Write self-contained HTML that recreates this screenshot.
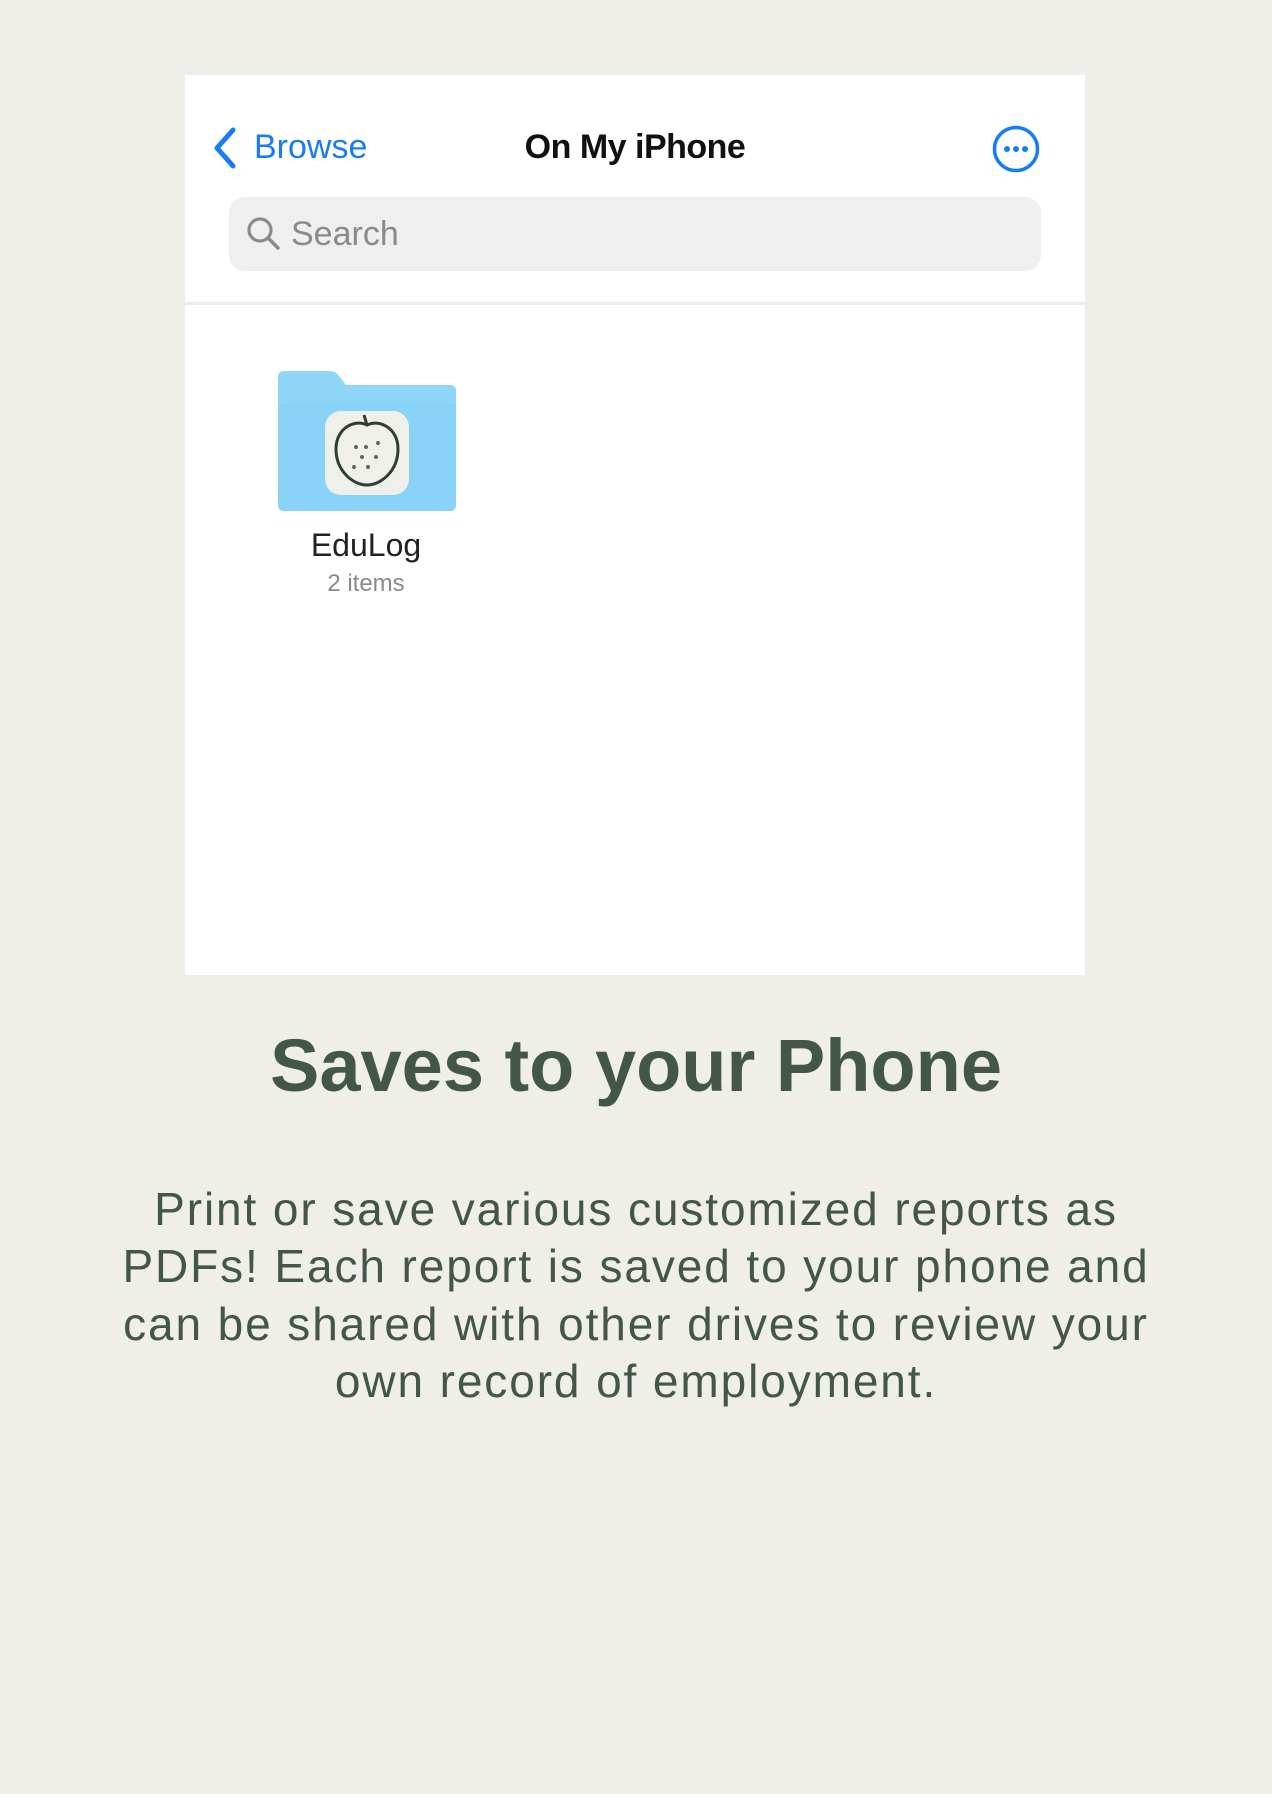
<!DOCTYPE html>
<html><head><meta charset="utf-8"><style>
html,body{margin:0;padding:0}
body{width:1272px;height:1794px;background:#efeee9;position:relative;overflow:hidden;font-family:"Liberation Sans",sans-serif}
.card{position:absolute;left:185px;top:75px;width:900px;height:900px;background:#fff}
.abs{position:absolute;white-space:nowrap}
</style></head><body>
<div class="card">
  <svg class="abs" style="left:26px;top:52px" width="28" height="42" viewBox="0 0 28 42"><path d="M22 3 L6 21 L22 39" fill="none" stroke="#1a7cf5" stroke-width="5" stroke-linecap="round" stroke-linejoin="round"/></svg>
  <div class="abs" style="left:69px;top:52px;font-size:34px;color:#1a7cf5;line-height:40px">Browse</div>
  <div class="abs" style="left:0;width:900px;text-align:center;top:52px;font-size:34px;font-weight:bold;color:#111;line-height:40px;letter-spacing:-0.5px">On My iPhone</div>
  <svg class="abs" style="left:806px;top:49px" width="50" height="50" viewBox="0 0 50 50"><circle cx="25" cy="25" r="21.5" fill="none" stroke="#1a7cf5" stroke-width="3.5"/><circle cx="16" cy="25" r="3" fill="#1a7cf5"/><circle cx="25" cy="25" r="3" fill="#1a7cf5"/><circle cx="34" cy="25" r="3" fill="#1a7cf5"/></svg>
  <div class="abs" style="left:44px;top:122px;width:812px;height:74px;border-radius:16px;background:#efefef"></div>
  <svg class="abs" style="left:60px;top:140px" width="38" height="38" viewBox="0 0 38 38"><circle cx="15" cy="15" r="11" fill="none" stroke="#8a8a8e" stroke-width="3.2"/><path d="M23 23 L33 33" stroke="#8a8a8e" stroke-width="3.5" stroke-linecap="round"/></svg>
  <div class="abs" style="left:106px;top:139px;font-size:34px;color:#8a8a8e;line-height:40px">Search</div>
  <div class="abs" style="left:0;top:227px;width:900px;height:3px;background:#ececec"></div>
  <svg class="abs" style="left:93px;top:296px" width="178" height="140" viewBox="0 0 178 140"><path d="M0 6 Q0 0 6 0 L52 0 Q58 0 62 6 L68 14 L172 14 Q178 14 178 20 L178 134 Q178 140 172 140 L6 140 Q0 140 0 134 Z" fill="#8fd6f8"/><rect x="0" y="30" width="178" height="110" rx="6" fill="#88d3f7"/><rect x="47" y="40" width="84" height="84" rx="16" fill="#f0f0ea"/><path d="M89 54 C78 48 58 56 58 78 C58 100 75 114 89 114 C103 114 120 100 120 78 C120 56 100 48 89 54 Z M89 54 L86 44" fill="none" stroke="#2f3d33" stroke-width="3"/><g fill="#5a6a5e"><circle cx="78" cy="76" r="2"/><circle cx="88" cy="76" r="2"/><circle cx="100" cy="72" r="2"/><circle cx="84" cy="86" r="2"/><circle cx="98" cy="86" r="2"/><circle cx="76" cy="96" r="2"/><circle cx="90" cy="96" r="2"/></g></svg>
  <div class="abs" style="left:81px;width:200px;text-align:center;top:451px;font-size:32px;color:#222;line-height:38px">EduLog</div>
  <div class="abs" style="left:81px;width:200px;text-align:center;top:495px;font-size:24px;color:#8a8a8e;line-height:28px">2 items</div>
</div>
<div class="abs" style="left:0;width:1272px;text-align:center;top:1022px;font-size:74px;font-weight:bold;color:#43564a;line-height:88px">Saves to your Phone</div>
<div class="abs" style="left:0;width:1272px;text-align:center;top:1181px;font-size:46px;color:#43564a;line-height:57.3px;white-space:normal;letter-spacing:1.9px">Print or save various customized reports as<br>PDFs! Each report is saved to your phone and<br>can be shared with other drives to review your<br>own record of employment.</div>
</body></html>
